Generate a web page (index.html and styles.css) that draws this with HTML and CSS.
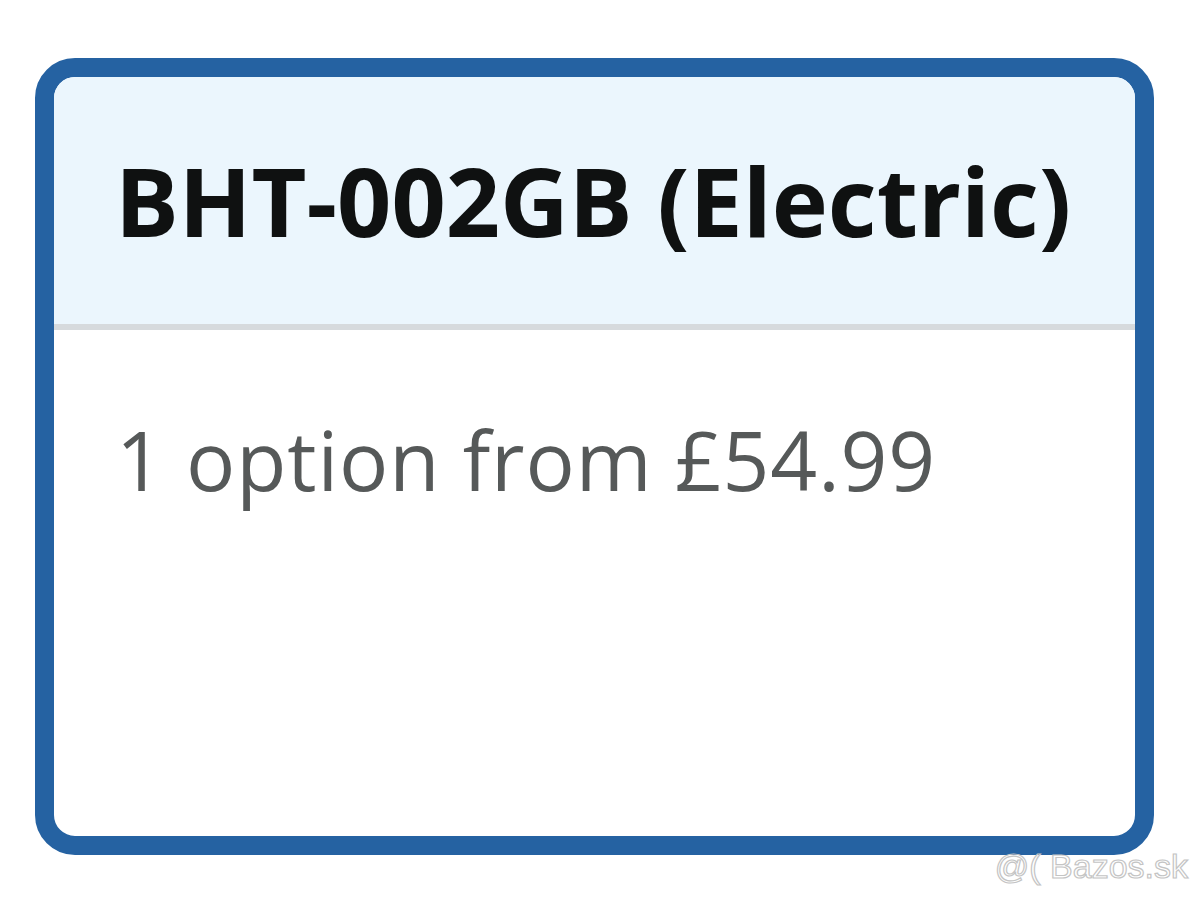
FILE: index.html
```html
<!DOCTYPE html>
<html>
<head>
<meta charset="utf-8">
<link rel="stylesheet" href="styles.css">
</head>
<body>
<div class="page">
  <div class="card">
    <div class="card-head">
      <h1 class="title">BHT-002GB (Electric)</h1>
    </div>
    <div class="card-body">
      <p class="options">1 option from £54.99</p>
    </div>
  </div>
  <div class="watermark">@( Bazos.sk</div>
</div>
</body>
</html>
```
FILE: styles.css
```css
html, body {
  margin: 0;
  padding: 0;
  background: #ffffff;
}
.page {
  position: relative;
  width: 1200px;
  height: 898px;
  padding: 58px 0 0 35px;
  box-sizing: border-box;
}
.card {
  width: 1119px;
  height: 797px;
  box-sizing: border-box;
  border: 19px solid #2562a2;
  border-radius: 40px;
  overflow: hidden;
  display: flex;
  flex-direction: column;
  background: #ffffff;
}
.card-head {
  height: 247px;
  background: #ebf6fd;
  border-bottom: 6px solid #d6dadd;
  display: flex;
  align-items: center;
  padding-left: 61px;
  flex: none;
}
.title {
  margin: 0;
  font-family: "Open Sans", sans-serif;
  font-weight: 700;
  font-size: 95px;
  color: #0f1111;
  line-height: 1;
}
.card-body {
  padding: 88px 0 0 62px;
}
.options {
  margin: 0;
  font-family: "Open Sans", sans-serif;
  font-weight: 400;
  font-size: 82px;
  letter-spacing: 0.9px;
  color: #565959;
  line-height: 1;
}
.watermark {
  position: absolute;
  right: 12px;
  bottom: 12px;
  font-family: "Liberation Sans", Arial, sans-serif;
  font-size: 34px;
  color: transparent;
  -webkit-text-stroke: 1.2px #c4c4c4;
}
```
